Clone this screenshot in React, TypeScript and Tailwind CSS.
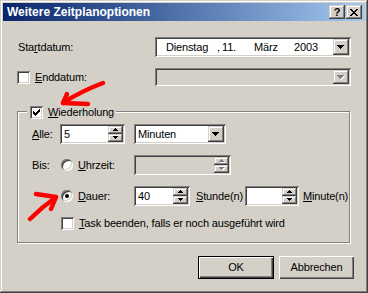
import React from 'react';

// classic 3D borders
const sunken = 'shadow-[inset_1px_1px_#808080,inset_-1px_-1px_#ffffff,inset_2px_2px_#404040,inset_-2px_-2px_#d4d0c8]';
const raised = 'shadow-[inset_-1px_-1px_#404040,inset_1px_1px_#d4d0c8,inset_-2px_-2px_#808080,inset_2px_2px_#ffffff]';
const pushBtn = 'shadow-[inset_1px_1px_#ffffff,inset_-1px_-1px_#404040,inset_-2px_-2px_#808080]';

function DownArrow({ disabled }: { disabled?: boolean }) {
  const d = 'M0 0h7v1h-7zM1 1h5v1h-5zM2 2h3v1h-3zM3 3h1v1h-1z';
  return (
    <svg width="8" height="5" viewBox="0 0 8 5" shapeRendering="crispEdges">
      {disabled && <path d={d} fill="#ffffff" transform="translate(1 1)" />}
      <path d={d} fill={disabled ? '#808080' : '#000000'} />
    </svg>
  );
}

function SpinArrow({ up, disabled }: { up?: boolean; disabled?: boolean }) {
  const d = up ? 'M2 0h1v1h-1zM1 1h3v1h-3zM0 2h5v1h-5z' : 'M0 0h5v1h-5zM1 1h3v1h-3zM2 2h1v1h-1z';
  return (
    <svg width="6" height="4" viewBox="0 0 6 4" shapeRendering="crispEdges">
      {disabled && <path d={d} fill="#ffffff" transform="translate(1 1)" />}
      <path d={d} fill={disabled ? '#808080' : '#000000'} />
    </svg>
  );
}

function DropButton({ disabled, h = 'h-[16px]' }: { disabled?: boolean; h?: string }) {
  return (
    <div className={`w-[16px] ${h} bg-[#d4d0c8] flex items-center justify-center shrink-0 ${raised}`}>
      <DownArrow disabled={disabled} />
    </div>
  );
}

function SpinEdit({ w, value, disabled }: { w: string; value?: string; disabled?: boolean }) {
  return (
    <div className={`${w} h-[20px] flex p-[2px] shrink-0 ${disabled ? 'bg-[#d4d0c8]' : 'bg-white'} ${sunken}`}>
      <div className="flex-1 pl-[2px] flex items-center">{value}</div>
      <div className="w-[15px] flex flex-col">
        <div className={`h-[8px] bg-[#d4d0c8] flex items-center justify-center ${raised}`}>
          <SpinArrow up disabled={disabled} />
        </div>
        <div className={`h-[8px] bg-[#d4d0c8] flex items-center justify-center ${raised}`}>
          <SpinArrow disabled={disabled} />
        </div>
      </div>
    </div>
  );
}

function Checkbox({ checked }: { checked?: boolean }) {
  return (
    <div className={`w-[13px] h-[13px] bg-white shrink-0 flex items-center justify-center ${sunken}`}>
      {checked && (
        <svg width="7" height="7" viewBox="0 0 7 7" shapeRendering="crispEdges">
          <path d="M6 0h1v1h-1zM5 1h2v1h-2zM0 2h1v1h-1zM4 2h3v1h-3zM0 3h2v1h-2zM3 3h3v1h-3zM0 4h5v1h-5zM1 5h3v1h-3zM2 6h1v1h-1z" fill="#000" />
        </svg>
      )}
    </div>
  );
}

function Radio({ checked }: { checked?: boolean }) {
  return (
    <div className={`w-[12px] h-[12px] rounded-full bg-white shrink-0 flex items-center justify-center ${sunken}`}>
      {checked && <div className="w-[4px] h-[4px] rounded-full bg-black" />}
    </div>
  );
}

export default function App() {
  return (
    <div className="relative w-[368px] h-[293px] bg-[#d4d0c8] p-[3px] font-['Liberation_Sans',Arial,sans-serif] text-[11px] tracking-[-0.15px] leading-none text-black shadow-[inset_-1px_-1px_#404040,inset_1px_1px_#d4d0c8,inset_-2px_-2px_#808080,inset_2px_2px_#ffffff]">
      {/* Title bar */}
      <div className="h-[18px] flex items-center pl-[4px] pr-[3px] bg-linear-to-r from-[#0a246a] to-[#a6caf0]">
        <span className="flex-1 text-white font-bold text-[12px] tracking-normal">Weitere Zeitplanoptionen</span>
        <div className="flex gap-[1px]">
          <div className={`w-[16px] h-[14px] bg-[#d4d0c8] flex items-center justify-center font-bold text-[11px] ${raised}`}>?</div>
          <div className={`w-[16px] h-[14px] bg-[#d4d0c8] flex items-center justify-center ${raised}`}>
            <svg width="8" height="7" viewBox="0 0 8 7" shapeRendering="crispEdges">
              <path d="M0 0h2v1h-2zM6 0h2v1h-2zM1 1h2v1h-2zM5 1h2v1h-2zM2 2h4v1h-4zM3 3h2v1h-2zM2 4h4v1h-4zM1 5h2v1h-2zM5 5h2v1h-2zM0 6h2v1h-2zM6 6h2v1h-2z" fill="#000" />
            </svg>
          </div>
        </div>
      </div>

      <div className="pl-[15px]">
        {/* Startdatum */}
        <div className="mt-[16px] h-[20px] flex items-center">
          <span className="w-[137px]">Sta<span className="underline">r</span>tdatum:</span>
          <div className={`w-[196px] h-[20px] bg-white flex items-center p-[2px] ${sunken}`}>
            <span className="pl-[9px] w-[60px]">Dienstag</span>
            <span className="w-[5px]">,</span>
            <span className="w-[32px]">11.</span>
            <span className="w-[40px]">März</span>
            <span>2003</span>
            <div className="ml-auto"><DropButton /></div>
          </div>
        </div>

        {/* Enddatum */}
        <div className="mt-[11px] h-[18px] flex items-center">
          <div className="ml-[-1px]"><Checkbox /></div>
          <span className="ml-[5px] w-[120px]"><span className="underline">E</span>nddatum:</span>
          <div className={`w-[196px] h-[18px] bg-[#d4d0c8] flex items-center justify-end p-[2px] ${sunken}`}>
            <DropButton disabled h="h-[14px]" />
          </div>
        </div>

        {/* Wiederholung group */}
        <div className="relative mt-[25px] ml-[-1px] w-[333px] h-[132px] border border-[#808080] shadow-[inset_1px_1px_#ffffff,1px_1px_#ffffff] pt-[12px] pl-[14px]">
          <div className="absolute left-[9px] top-[-6px] h-[13px] bg-[#d4d0c8] pl-[3px] pr-[2px] flex items-center gap-[5px]">
            <Checkbox checked />
            <span><span className="underline">W</span>iederholung</span>
          </div>

          <div className="h-[20px] flex items-center">
            <span className="w-[28px]"><span className="underline">A</span>lle:</span>
            <SpinEdit w="w-[65px]" value="5" />
            <div className={`ml-[9px] w-[92px] h-[20px] bg-white flex items-center p-[2px] ${sunken}`}>
              <span className="flex-1 pl-[2px]">Minuten</span>
              <DropButton />
            </div>
          </div>

          <div className="mt-[11px] h-[20px] flex items-center">
            <span className="w-[29px]">Bis:</span>
            <Radio />
            <span className="ml-[5px] w-[56px]"><span className="underline">U</span>hrzeit:</span>
            <SpinEdit w="w-[97px]" disabled />
          </div>

          <div className="mt-[11px] h-[20px] flex items-center">
            <span className="w-[29px]" />
            <Radio checked />
            <span className="ml-[5px] w-[56px]"><span className="underline">D</span>auer:</span>
            <SpinEdit w="w-[56px]" value="40" />
            <span className="ml-[6px] w-[49px]"><span className="underline">S</span>tunde(n)</span>
            <SpinEdit w="w-[54px]" />
            <span className="ml-[4px]"><span className="underline">M</span>inute(n)</span>
          </div>

          <div className="mt-[11px] h-[13px] flex items-center">
            <span className="w-[29px]" />
            <Checkbox />
            <span className="ml-[5px]"><span className="underline">T</span>ask beenden, falls er noch ausgeführt wird</span>
          </div>
        </div>

        {/* Buttons */}
        <div className="mt-[13px] ml-[180px] flex gap-[5px]">
          <div className="w-[76px] h-[23px] border border-black bg-[#d4d0c8]">
            <div className={`w-full h-full flex items-center justify-center ${pushBtn}`}>OK</div>
          </div>
          <div className={`w-[75px] h-[23px] bg-[#d4d0c8] flex items-center justify-center ${pushBtn}`}>Abbrechen</div>
        </div>
      </div>

      {/* red hand-drawn arrows */}
      <svg className="absolute inset-0 pointer-events-none" width="368" height="293" viewBox="0 0 368 293">
        <g stroke="#ff0000" strokeWidth="4.5" strokeLinecap="round" strokeLinejoin="round" fill="none">
          <path d="M103 83 Q84 90 64 102" />
          <path d="M63 103 L88 104" />
          <path d="M63 103 L67 94" />
          <path d="M30 219 Q42 207 55 198" />
          <path d="M56 197 L36 194" />
          <path d="M56 197 L51 209" />
        </g>
      </svg>
    </div>
  );
}
